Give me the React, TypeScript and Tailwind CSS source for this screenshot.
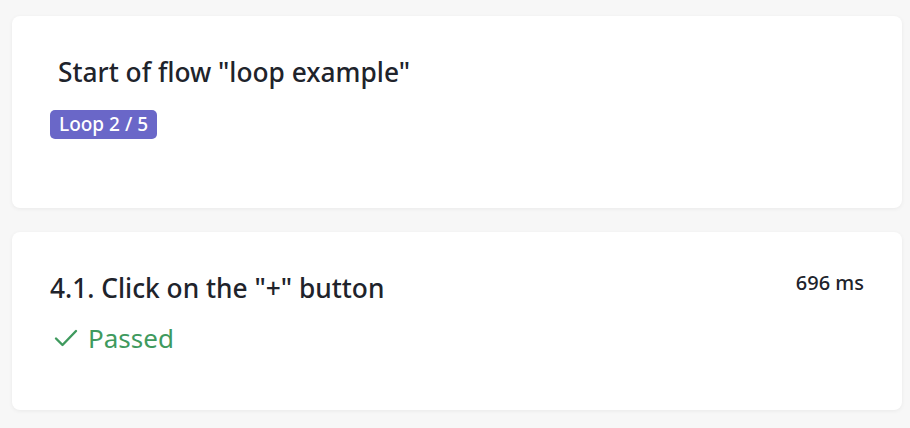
import React from 'react';

const font = { fontFamily: '"Noto Sans", "Open Sans", sans-serif' };

const CheckIcon: React.FC = () => (
  <svg width="24" height="20" viewBox="0 0 24 20" fill="none" className="shrink-0">
    <path d="M2 10.5 L8.5 17 L22 3" stroke="#3f9a5e" strokeWidth="2.4" strokeLinecap="round" strokeLinejoin="round" />
  </svg>
);

const App: React.FC = () => {
  return (
    <div className="min-h-[428px] w-full bg-[#f7f7f7] pl-3 pr-2 pt-4" style={font}>
      {/* flow start card */}
      <div className="flex h-[192px] flex-col items-start rounded-lg bg-white px-[38px] pt-[38px] shadow-[0_1px_4px_rgba(0,0,0,0.06)]">
        <h2 className="pl-[8px] text-[26.3px] font-medium leading-[36px] text-[#20232b]">Start of flow "loop example"</h2>
        <span className="mt-[20px] rounded-[5px] bg-[#6a67c8] px-[9px] text-[19px] font-medium leading-[29px] text-white">
          Loop 2 / 5
        </span>
      </div>

      {/* step card */}
      <div className="mt-6 flex h-[178px] items-start justify-between rounded-lg bg-white pl-[38px] pr-[38px] pt-[38px] shadow-[0_1px_4px_rgba(0,0,0,0.06)]">
        <div className="flex flex-col">
          <h3 className="text-[26.3px] font-medium leading-[36px] text-[#20232b]">4.1. Click on the "+" button</h3>
          <div className="mt-[14px] flex items-center gap-[10px] pl-[4px] text-[26px] leading-[36px] text-[#3f9a5e]">
            <CheckIcon />
            <span>Passed</span>
          </div>
        </div>
        <span className="-mt-px text-[20px] font-medium leading-[28px] text-[#20232b]">696 ms</span>
      </div>
    </div>
  );
};

export default App;
